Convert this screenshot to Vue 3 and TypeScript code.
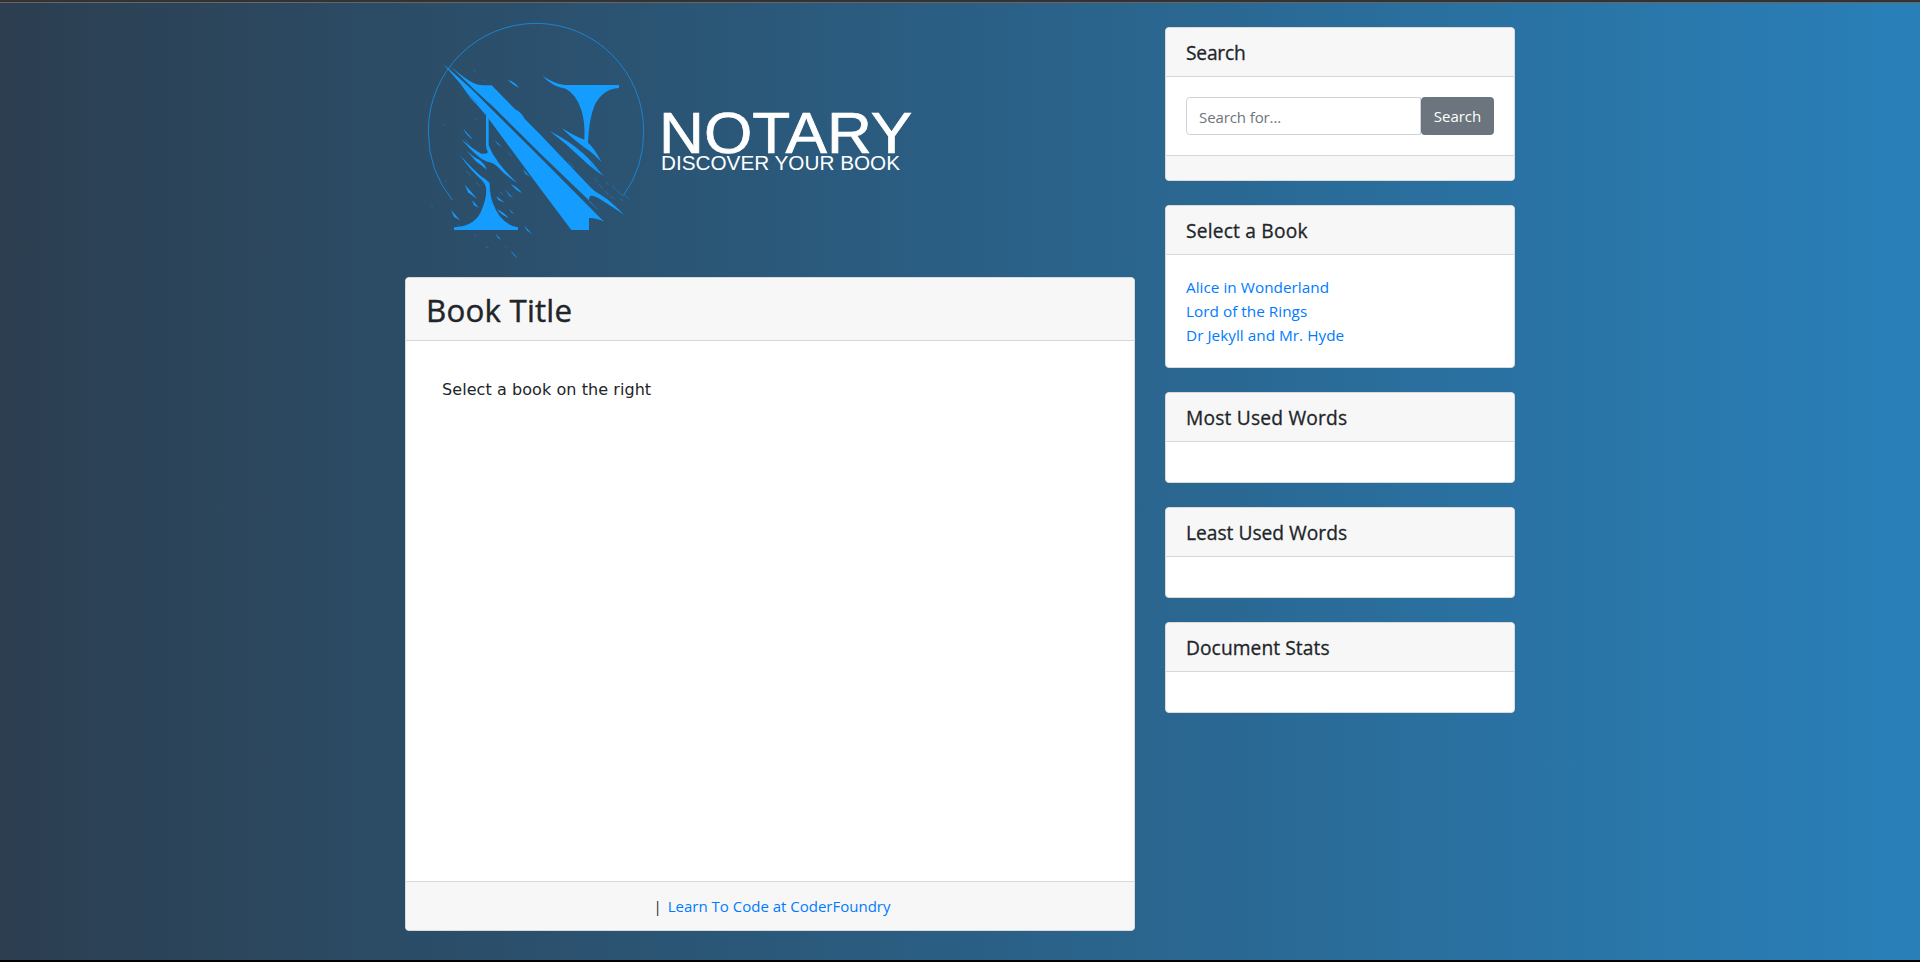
<script setup lang="ts">
interface Panel { title: string; kind: 'search' | 'books' | 'empty'; cls: string }

const panels: Panel[] = [
  { title: 'Search', kind: 'search', cls: 't-search' },
  { title: 'Select a Book', kind: 'books', cls: 't-select' },
  { title: 'Most Used Words', kind: 'empty', cls: 't-most' },
  { title: 'Least Used Words', kind: 'empty', cls: 't-least' },
  { title: 'Document Stats', kind: 'empty', cls: 't-stats' },
]
const books: string[] = ['Alice in Wonderland', 'Lord of the Rings', 'Dr Jekyll and Mr. Hyde']
</script>

<template>
  <div class="page">
    <div class="container">
      <main class="main">
        <svg class="logo" width="550" height="271" viewBox="0 0 1650 813" role="img" aria-label="Notary">
          <path class="ring" d="M157 600A323 323 0 0 1 85 393A323 323 0 0 1 408 70A323 323 0 0 1 731 393A323 323 0 0 1 670 587" />
          <g class="mark">
            <!-- diagonal of the N -->
            <path d="M150 198Q195 237 222 250Q234 256 250 256H275L420 403L570 560Q582 574 604 586Q628 600 646 619L673 645Q640 622 608 602Q582 585 570 588Q564 600 570 607L598 634L568 602L420 460L290 331L222 268Z" />
            <path d="M130 192L215 268L290 343L420 472L612 665Q588 653 567 654V690H514L420 565L258 346L232 316L212 295L180 250Z" />
            <!-- right serif -->
            <path d="M427 228Q470 254 495 255H657V264Q606 268 584 316Q567 356 564 428Q580 440 605 486L573 456Q528 426 484 383Q520 406 553 419Q556 366 544 330Q528 282 497 266Q460 262 427 228Z" />
            <path d="M449 393Q510 424 548 459Q580 487 607 526Q570 500 546 476Q500 432 449 393Z" />
            <!-- left stem -->
            <path d="M258 346L266 352V436Q276 463 296 488Q320 520 352 549Q316 527 296 503Q280 487 262 485Q238 480 184 418Q222 450 244 461Q258 463 264 457Q258 447 258 436Z" />
            <path d="M198 450Q220 472 239 480Q257 495 260 509Q245 495 229 485Z" />
            <path d="M180 466Q220 510 246 531Q263 540 269 551Q269 586 279 610Q300 672 354 682V690H162V682Q230 680 248 622Q261 588 258 562Q256 552 244 539Q212 512 180 466Z" />
            <!-- splinters -->
            <path d="M324 240Q344 244 357 264Q342 257 324 240Z" />
            <path d="M190 386Q206 404 218 418Q200 408 190 386Z" />
            <path d="M194 554Q212 572 232 598L204 577Z" />
            <path d="M153 629L181 662L162 650Z" />
            <path d="M333 552Q352 561 366 579Q346 571 333 552Z" />
            <path d="M291 628Q316 640 325 654Q302 644 291 628Z" />
            <path d="M314 567L341 597L327 586Z" />
            <path d="M216 600L237 624L222 616Z" />
            <path d="M372 676L396 702L382 692Z" />
            <path d="M286 701L304 719L294 714Z" />
            <path d="M331 750L355 777L341 765Z" />
            <path d="M284 420L307 443L292 432Z" />
            <path d="M368 506L390 531L376 521Z" />
            <path d="M346 328Q365 337 374 358L360 347Z" />
            <path d="M326 626L344 643L334 637Z" />
            <path d="M289 588L314 608L295 600Z" />
          </g>
          <g class="dust">
            <path d="M221 211l7 7M249 239l4 3M128 373l5 3M226 357l5 4M198 513l15 14M228 546l12 13M134 542l4 3M94 617l4 5M266 569l7 14M300 576l9 8M322 456l15 14M195 418l14 18M223 703l7 6M256 740l10 3M315 738l5 4M271 603l8 9M172 674l10 8M570 488l15 14M586 503l26 24M572 495l24 20M582 536l10 10M596 552l12 14M617 545l8 9M636 556l12 12M650 571l18 16M614 573l12 12M632 588l9 9M673 584l14 14M660 596l10 6M504 486l18 18" />
          </g>
          <path class="crack" d="M208 286l24 24M268 309l24 24M334 376l26 26" />
          <text class="word" x="777" y="458" textLength="760" lengthAdjust="spacingAndGlyphs">NOTARY</text>
          <text class="tag" x="783" y="510" textLength="717" lengthAdjust="spacingAndGlyphs">DISCOVER YOUR BOOK</text>
        </svg>
        <section class="card">
          <header class="card-header"><h1>Book Title</h1></header>
          <div class="reader"><p>Select a book on the right</p></div>
          <footer class="card-footer credit"><span class="bar">|</span><a>Learn To Code at CoderFoundry</a></footer>
        </section>
      </main>
      <aside class="side">
        <section v-for="p in panels" :key="p.title" class="card">
          <header class="card-header"><h5 :class="p.cls">{{ p.title }}</h5></header>
          <div class="card-body">
            <div v-if="p.kind === 'search'" class="input-group">
              <input type="text" placeholder="Search for..." />
              <button type="button">Search</button>
            </div>
            <template v-else-if="p.kind === 'books'">
              <div v-for="b in books" :key="b" class="book"><a>{{ b }}</a></div>
            </template>
          </div>
          <footer v-if="p.kind === 'search'" class="card-footer"></footer>
        </section>
      </aside>
    </div>
  </div>
</template>

<style>
body { margin: 0; overflow: hidden; }
</style>

<style scoped>
* { box-sizing: border-box; }
.page {
  height: 962px;
  border-top: 2px solid #333;
  border-bottom: 2px solid #000;
  background: linear-gradient(to right, #2c3e50, #2980b9);
  box-shadow: inset 0 1px 0 #666;
  font: 15px/24px "Open Sans", "Noto Sans", sans-serif;
  color: #212529;
}
.container { width: 1110px; margin: 0 auto; display: flex; gap: 30px; }
.main { width: 730px; }
.side { width: 350px; padding-top: 25px; display: flex; flex-direction: column; gap: 24px; }
.logo { display: block; margin: -2px 0 6px -5px; overflow: visible; }
.ring { fill: none; stroke: #1a83d1; stroke-width: 3; }
.mark { fill: #149cff; }
.dust { fill: none; stroke: #1a83d1; stroke-width: 2.4; opacity: .75; }
.crack { fill: none; stroke: #2b5878; stroke-width: 1.5; opacity: .8; }
.word { font: 173px "Liberation Sans", Arial, sans-serif; fill: #fff; stroke: #fff; stroke-width: 2; }
.tag { font: 59px "Liberation Sans", Arial, sans-serif; fill: #fff; }
.card { background: #fff; border: 1px solid #d9dadb; border-radius: 4px; overflow: hidden; }
.card-header { padding: 12px 20px; background: #f7f7f7; border-bottom: 1px solid #d8d8d8; }
.card-footer { padding: 12px 20px; background: #f7f7f7; border-top: 1px solid #d8d8d8; }
.card-body { padding: 20px; min-height: 40px; }
h1, h5, p { margin: 0; }
h1 { padding-top: 2px; font-size: 31.3px; font-weight: 500; line-height: 36.4px; letter-spacing: .2px; -webkit-text-stroke: .4px #212529; }
h5 { padding-top: 1px; font-size: 19.2px; font-weight: 500; line-height: 23px; -webkit-text-stroke: .3px #212529; }
.t-search { letter-spacing: -.2px; }
.t-select { letter-spacing: .2px; }
.t-most { letter-spacing: .2px; }
.t-stats { letter-spacing: .08px; }
.reader { height: 540px; padding: 37px 36px 36px; }
.reader p { font: 16px/24px "DejaVu Sans", Verdana, sans-serif; letter-spacing: .07px; }
.credit { padding-left: 24px; text-align: center; }
.bar { margin-right: 6px; }
.book { font-size: 15.3px; letter-spacing: .03px; }
a { color: #007bff; text-decoration: none; }
.input-group { display: flex; }
input {
  flex: 1; min-width: 0; height: 38px; padding: 8px 12px 6px; border: 1px solid #ced4da;
  border-radius: 4px 0 0 4px; font: inherit; letter-spacing: -.1px; color: #495057; outline: none;
}
input::placeholder { color: #6c757d; opacity: 1; }
button {
  width: 73px; height: 38px; padding: 0; border: 0; border-radius: 4px;
  background: #6c757d; color: #fff; font: inherit;
}
</style>
